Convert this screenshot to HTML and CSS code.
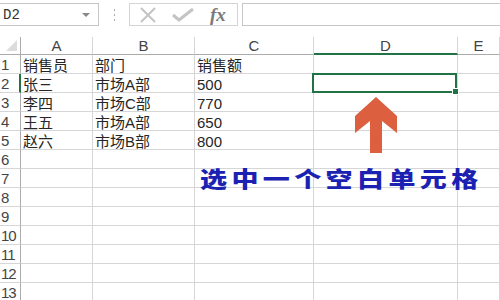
FILE: index.html
```html
<!DOCTYPE html>
<html lang="zh-CN">
<head>
    <meta charset="UTF-8">
    <title>销售表</title>
    <link rel="stylesheet" href="styles.css">
</head>
<body>
    <div class="toolbar">
        <div class="namebox">
            <span class="name">D2</span>
            <span class="caret"></span>
        </div>
        <div class="grip"><i></i><i></i><i></i></div>
        <div class="fx-buttons">
            <svg class="icon" width="20" height="16" viewBox="0 0 20 16">
                <path d="M3 1 L17 15 M17 1 L3 15" stroke="#c4c4c4" stroke-width="2" fill="none"/>
            </svg>
            <svg class="icon" width="22" height="14" viewBox="0 0 22 14">
                <path d="M1 7 L7 12 L21 1" stroke="#c4c4c4" stroke-width="3" fill="none"/>
            </svg>
            <span class="fx">fx</span>
        </div>
        <div class="formula"></div>
    </div>

    <div class="sheet">
        <div class="grid">
            <div class="corner"><span class="tri"></span></div>
            <div class="col">A</div>
            <div class="col">B</div>
            <div class="col">C</div>
            <div class="col active">D</div>
            <div class="col">E</div>

            <div class="row">1</div><div class="cell">销售员</div><div class="cell">部门</div><div class="cell">销售额</div><div class="cell"></div><div class="cell"></div>
            <div class="row active">2</div><div class="cell">张三</div><div class="cell">市场A部</div><div class="cell">500</div><div class="cell selected"><span class="handle"></span></div><div class="cell"></div>
            <div class="row">3</div><div class="cell">李四</div><div class="cell">市场C部</div><div class="cell">770</div><div class="cell"></div><div class="cell"></div>
            <div class="row">4</div><div class="cell">王五</div><div class="cell">市场A部</div><div class="cell">650</div><div class="cell"></div><div class="cell"></div>
            <div class="row">5</div><div class="cell">赵六</div><div class="cell">市场B部</div><div class="cell">800</div><div class="cell"></div><div class="cell"></div>
            <div class="row">6</div><div class="cell"></div><div class="cell"></div><div class="cell"></div><div class="cell"></div><div class="cell"></div>
            <div class="row">7</div><div class="cell"></div><div class="cell"></div><div class="cell"></div><div class="cell"></div><div class="cell"></div>
            <div class="row">8</div><div class="cell"></div><div class="cell"></div><div class="cell"></div><div class="cell"></div><div class="cell"></div>
            <div class="row">9</div><div class="cell"></div><div class="cell"></div><div class="cell"></div><div class="cell"></div><div class="cell"></div>
            <div class="row">10</div><div class="cell"></div><div class="cell"></div><div class="cell"></div><div class="cell"></div><div class="cell"></div>
            <div class="row">11</div><div class="cell"></div><div class="cell"></div><div class="cell"></div><div class="cell"></div><div class="cell"></div>
            <div class="row">12</div><div class="cell"></div><div class="cell"></div><div class="cell"></div><div class="cell"></div><div class="cell"></div>
            <div class="row">13</div><div class="cell"></div><div class="cell"></div><div class="cell"></div><div class="cell"></div><div class="cell"></div>
        </div>

        <!-- annotation over the sheet -->
        <svg class="arrow" width="44" height="58" viewBox="0 0 44 58">
            <polygon points="21,0 42,19 42,36 27,24 27,56 15,56 15,24 0,36 0,19" fill="#dc6040"/>
        </svg>
        <div class="note">选中一个空白单元格</div>
    </div>
</body>
</html>
```

FILE: styles.css
```css
body {
    margin: 0;
    width: 500px;
    height: 300px;
    overflow: hidden;
    background: #fff;
    font-family: "Liberation Sans", "Noto Sans CJK SC", sans-serif;
}
.toolbar {
    display: flex;
    align-items: stretch;
    height: 23px;
    padding-top: 3px;
}
.namebox {
    width: 99px;
    border: 1px solid #c6c6c6;
    border-left: none;
    display: flex;
    align-items: center;
    justify-content: space-between;
    padding: 0 8px 0 3px;
    box-sizing: border-box;
}
.name {
    font-family: "Liberation Mono", monospace;
    font-size: 14px;
    color: #333;
}
.caret {
    width: 0;
    height: 0;
    border-left: 4px solid transparent;
    border-right: 4px solid transparent;
    border-top: 4px solid #888;
}
.grip {
    width: 30px;
    display: flex;
    flex-direction: column;
    align-items: center;
    justify-content: center;
    gap: 3px;
}
.grip i {
    width: 1px;
    height: 2px;
    background: #aaa;
}
.fx-buttons {
    width: 109px;
    border: 1px solid #d4d4d4;
    box-sizing: border-box;
    display: flex;
    align-items: center;
    padding-left: 8px;
    gap: 14px;
}
.fx {
    font-family: "Liberation Serif", serif;
    font-style: italic;
    font-weight: bold;
    font-size: 19px;
    color: #7a7a7a;
    margin-left: 2px;
}
.formula {
    flex: 1;
    margin-left: 4px;
    border: 1px solid #c6c6c6;
    border-right: none;
}
.sheet {
    position: relative;
    margin-top: 11px;
}
.grid {
    display: grid;
    grid-template-columns: 21px 72px 102px 119px 144px 42px;
    grid-template-rows: 18px repeat(13, 19px);
}
.grid > div {
    box-sizing: border-box;
    border-right: 1px solid #d6d6d6;
    border-bottom: 1px solid #d6d6d6;
}
.corner {
    position: relative;
    border-bottom-color: #ababab !important;
    border-right-color: #ababab !important;
}
.tri {
    position: absolute;
    right: 3px;
    bottom: 3px;
    width: 0;
    height: 0;
    border-left: 11px solid transparent;
    border-bottom: 11px solid #dcdcdc;
}
.col {
    text-align: center;
    font-size: 15px;
    line-height: 17px;
    color: #444;
    border-bottom-color: #ababab !important;
}
.col.active {
    border-bottom: 2px solid #217346 !important;
}
.row {
    font-size: 15px;
    line-height: 20px;
    color: #444;
    padding-left: 1px;
    letter-spacing: -1px;
    border-right-color: #ababab !important;
    white-space: nowrap;
}
.row.active {
    border-right: 2px solid #217346 !important;
}
.cell {
    font-family: "Liberation Sans", "Noto Sans CJK SC", sans-serif;
    font-size: 15px;
    line-height: 21px;
    color: #262626;
    padding-left: 2px;
    white-space: nowrap;
}
.selected {
    position: relative;
}
.selected::after {
    content: "";
    position: absolute;
    left: -2px;
    top: -1px;
    right: 0;
    bottom: -1px;
    border: 2px solid #217346;
}
.handle {
    position: absolute;
    right: -2px;
    bottom: -3px;
    width: 5px;
    height: 5px;
    background: #217346;
    border: 1px solid #fff;
    z-index: 1;
}
.arrow {
    position: absolute;
    left: 355px;
    top: 60px;
}
.note {
    position: absolute;
    left: 200px;
    top: 127px;
    font-family: "Noto Sans CJK SC", sans-serif;
    font-weight: 900;
    font-size: 27px;
    line-height: 28px;
    letter-spacing: 4.4px;
    color: #1b22b2;
    white-space: nowrap;
    transform: scaleY(0.8);
    transform-origin: left center;
}
```
